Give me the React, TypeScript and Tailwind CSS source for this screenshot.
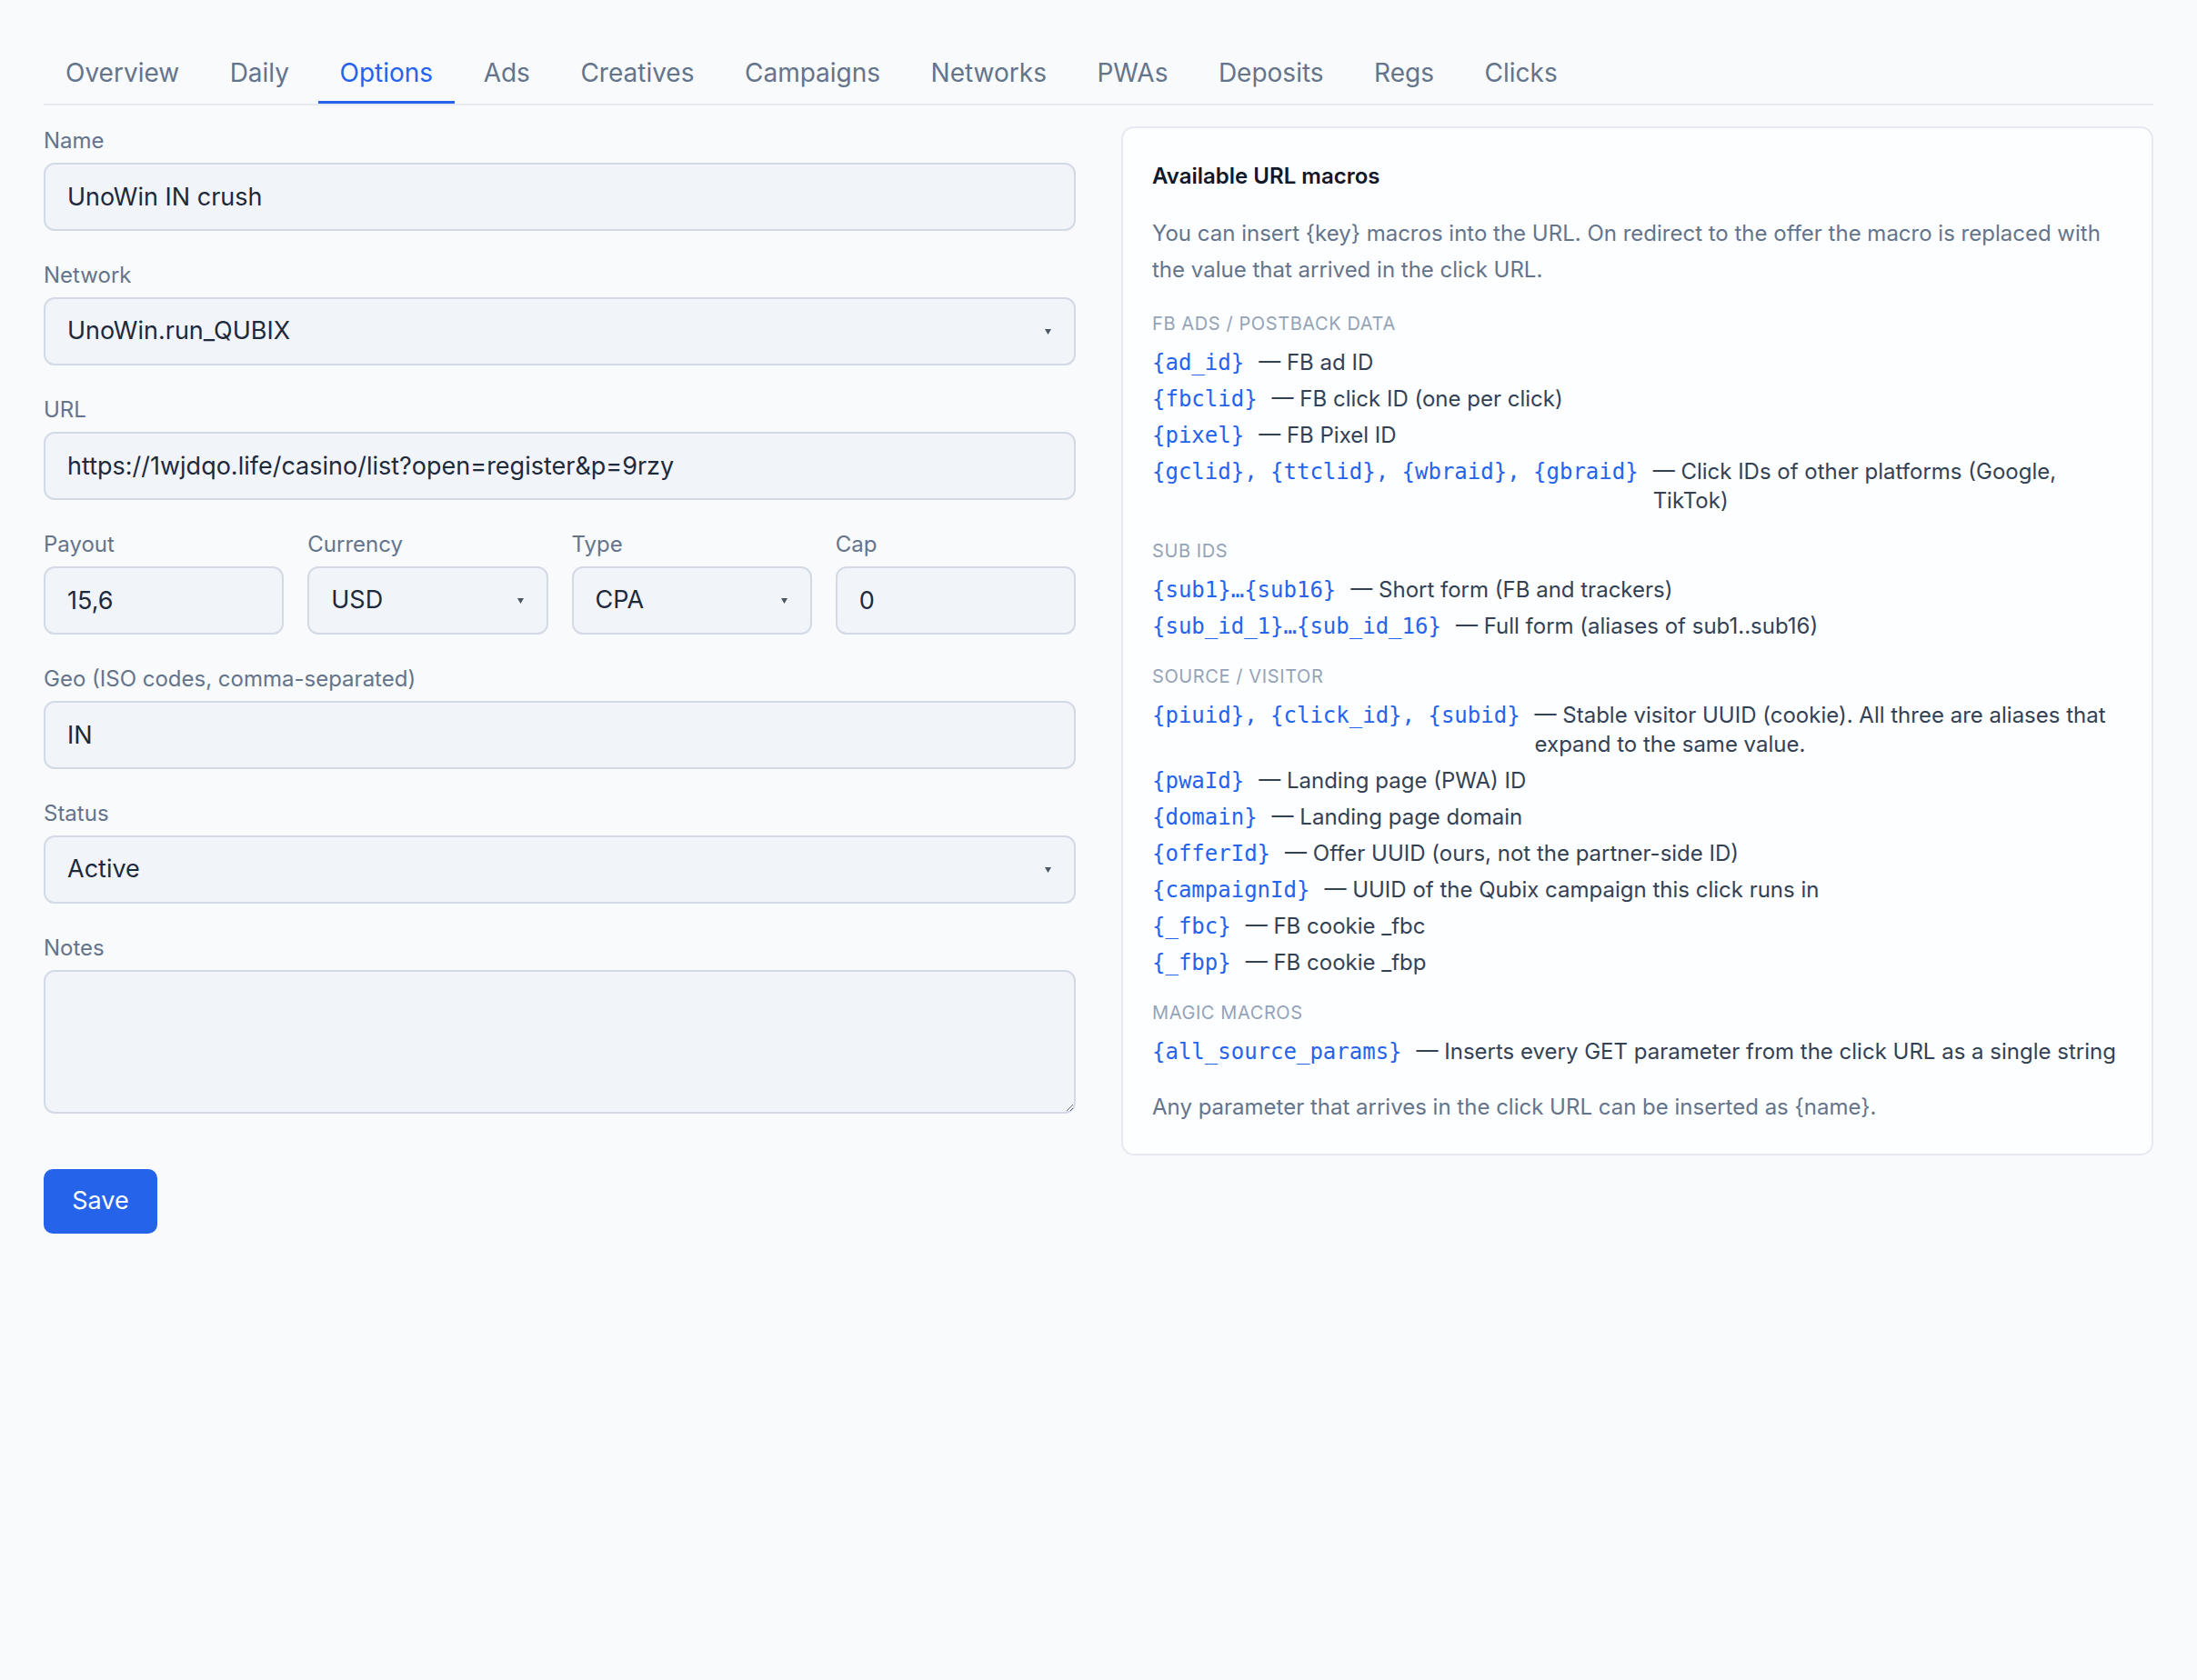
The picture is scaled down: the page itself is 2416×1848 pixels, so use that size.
import { useState } from 'react';

const tabs = ['Overview', 'Daily', 'Options', 'Ads', 'Creatives', 'Campaigns', 'Networks', 'PWAs', 'Deposits', 'Regs', 'Clicks'];

type Macro = { code: string; desc: string };
type Section = { title: string; items: Macro[] };

const sections: Section[] = [
    {
        title: 'FB Ads / Postback data',
        items: [
            { code: '{ad_id}', desc: '— FB ad ID' },
            { code: '{fbclid}', desc: '— FB click ID (one per click)' },
            { code: '{pixel}', desc: '— FB Pixel ID' },
            { code: '{gclid}, {ttclid}, {wbraid}, {gbraid}', desc: '— Click IDs of other platforms (Google, TikTok)' },
        ],
    },
    {
        title: 'Sub IDs',
        items: [
            { code: '{sub1}…{sub16}', desc: '— Short form (FB and trackers)' },
            { code: '{sub_id_1}…{sub_id_16}', desc: '— Full form (aliases of sub1..sub16)' },
        ],
    },
    {
        title: 'Source / Visitor',
        items: [
            { code: '{piuid}, {click_id}, {subid}', desc: '— Stable visitor UUID (cookie). All three are aliases that expand to the same value.' },
            { code: '{pwaId}', desc: '— Landing page (PWA) ID' },
            { code: '{domain}', desc: '— Landing page domain' },
            { code: '{offerId}', desc: '— Offer UUID (ours, not the partner-side ID)' },
            { code: '{campaignId}', desc: '— UUID of the Qubix campaign this click runs in' },
            { code: '{_fbc}', desc: '— FB cookie _fbc' },
            { code: '{_fbp}', desc: '— FB cookie _fbp' },
        ],
    },
    {
        title: 'Magic macros',
        items: [
            { code: '{all_source_params}', desc: '— Inserts every GET parameter from the click URL as a single string' },
        ],
    },
];

const inputCls =
    'w-full h-[75px] rounded-[12px] border-2 border-[#d3dae6] bg-[#f1f5f9] px-[24px] text-[27px] text-[#1e293b] outline-none';

function Label({ children }: { children: React.ReactNode }) {
    return <label className="block text-[24px] leading-[32px] text-[#64748b] mb-[8px]">{children}</label>;
}

function Caret() {
    return (
        <svg className="absolute right-[27px] top-1/2 -translate-y-1/2 pointer-events-none" width="7" height="6" viewBox="0 0 7 6">
            <path d="M0 0 H7 L3.5 6 Z" fill="#4b5563" />
        </svg>
    );
}

function SelectField({ value, options }: { value: string; options: string[] }) {
    const [v, setV] = useState(value);
    return (
        <div className="relative">
            <select value={v} onChange={(e) => setV(e.target.value)} className={inputCls + ' appearance-none'}>
                {options.map((o) => (
                    <option key={o}>{o}</option>
                ))}
            </select>
            <Caret />
        </div>
    );
}

export default function App() {
    const [active, setActive] = useState('Options');

    return (
        <div className="min-h-screen bg-[#f8fafc] px-[48px] pt-[48px] font-['Inter','Noto_Sans',sans-serif]">
            {/* Tabs */}
            <div className="flex gap-[7.5px] border-b-2 border-[#e5e9f0]">
                {tabs.map((t) => (
                    <button
                        key={t}
                        onClick={() => setActive(t)}
                        className={
                            'px-[24px] pt-[12px] pb-[11px] text-[28px] leading-[40px] border-b-[3px] ' +
                            (t === active ? 'text-[#2563eb] border-[#2563eb]' : 'text-[#64748b] border-transparent')
                        }
                    >
                        {t}
                    </button>
                ))}
            </div>

            <div className="grid grid-cols-2 gap-[50px] mt-[23px] items-start">
                {/* Form */}
                <div className="flex flex-col gap-[33px]">
                    <div>
                        <Label>Name</Label>
                        <input className={inputCls} defaultValue="UnoWin IN crush" />
                    </div>
                    <div>
                        <Label>Network</Label>
                        <SelectField value="UnoWin.run_QUBIX" options={['UnoWin.run_QUBIX']} />
                    </div>
                    <div>
                        <Label>URL</Label>
                        <input className={inputCls} defaultValue="https://1wjdqo.life/casino/list?open=register&p=9rzy" />
                    </div>
                    <div className="grid grid-cols-4 gap-[26px]">
                        <div>
                            <Label>Payout</Label>
                            <input className={inputCls} defaultValue="15,6" />
                        </div>
                        <div>
                            <Label>Currency</Label>
                            <SelectField value="USD" options={['USD', 'EUR']} />
                        </div>
                        <div>
                            <Label>Type</Label>
                            <SelectField value="CPA" options={['CPA', 'CPL', 'RevShare']} />
                        </div>
                        <div>
                            <Label>Cap</Label>
                            <input className={inputCls} defaultValue="0" />
                        </div>
                    </div>
                    <div>
                        <Label>Geo (ISO codes, comma-separated)</Label>
                        <input className={inputCls} defaultValue="IN" />
                    </div>
                    <div>
                        <Label>Status</Label>
                        <SelectField value="Active" options={['Active', 'Paused']} />
                    </div>
                    <div>
                        <Label>Notes</Label>
                        <textarea className={inputCls + ' h-[158px] block py-[16px]'} />
                    </div>
                    <div className="mt-[28px]">
                        <button className="h-[71px] w-[125px] rounded-[10px] bg-[#2563eb] text-[27px] text-white">Save</button>
                    </div>
                </div>

                {/* Macros panel */}
                <div className="rounded-[14px] border-2 border-[#e5e9f0] bg-[#fdfeff] px-[32px] pt-[35px] pb-[31px]">
                    <h3 className="text-[24px] leading-[36px] font-semibold text-[#111827]">Available URL macros</h3>
                    <p className="mt-[25px] text-[24px] leading-[40px] text-[#64748b]">
                        You can insert {'{key}'} macros into the URL. On redirect to the offer the macro is replaced with the value that arrived in the click URL.
                    </p>

                    {sections.map((s) => (
                        <div key={s.title} className="mt-[25px]">
                            <div className="text-[20px] leading-[28px] uppercase tracking-[0.03em] text-[#94a3b8]">{s.title}</div>
                            <div className="mt-[13px] flex flex-col gap-[8px]">
                                {s.items.map((m) => (
                                    <div key={m.code} className="flex gap-[16px] text-[24px] leading-[32px]">
                                        <code className="shrink-0 font-['DejaVu_Sans_Mono',monospace] text-[24px] text-[#2563eb]">{m.code}</code>
                                        <span className="text-[#334155]">{m.desc}</span>
                                    </div>
                                ))}
                            </div>
                        </div>
                    ))}

                    <p className="mt-[25px] text-[24px] leading-[40px] text-[#64748b]">
                        Any parameter that arrives in the click URL can be inserted as {'{name}'}.
                    </p>
                </div>
            </div>
        </div>
    );
}
